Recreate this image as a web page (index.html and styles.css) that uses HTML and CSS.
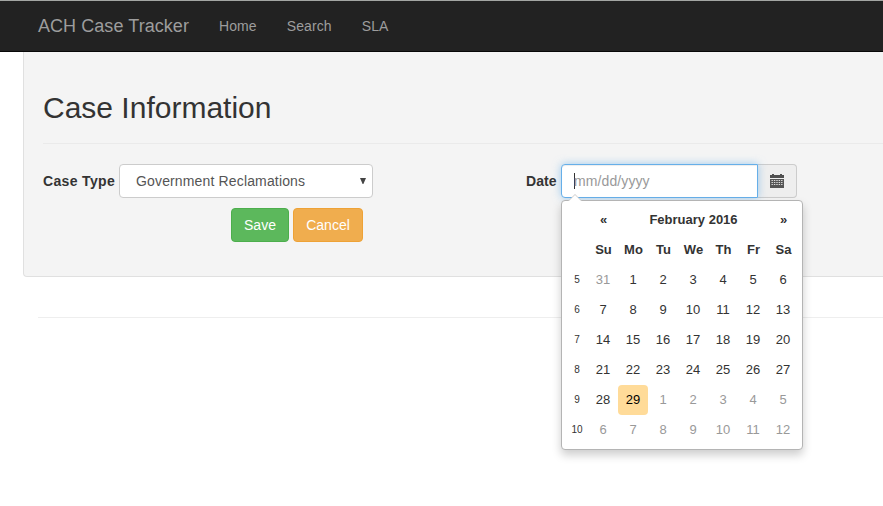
FILE: index.html
```html
<!DOCTYPE html>
<html lang="en">
<head>
<meta charset="utf-8">
<title>ACH Case Tracker</title>
<link rel="stylesheet" href="styles.css">
</head>
<body>
<nav class="navbar">
  <a class="brand">ACH Case Tracker</a>
  <a class="nav-link">Home</a>
  <a class="nav-link">Search</a>
  <a class="nav-link">SLA</a>
</nav>
<main class="well">
  <h2 class="title">Case Information</h2>
  <div class="form-row">
    <div class="case-type">
      <label class="label label-type">Case Type</label>
      <div class="control select"><span>Government Reclamations</span>
        <svg class="arrow" width="6" height="6" viewBox="0 0 6 6"><path d="M0 0h6L3.4 6h-.8z" fill="#444"/></svg>
      </div>
    </div>
    <div class="date">
      <label class="label label-date">Date</label>
      <div class="control input"><i class="caret"></i><span>mm/dd/yyyy</span></div>
      <div class="addon">
        <svg width="14" height="14" viewBox="0 0 14 14"><path fill="#505050" d="M0 1h2V0h2v1h6V0h2v1h2v3H0z"/><path fill="#555" fill-rule="evenodd" d="M0 5h14v9H0z"/><path d="M1.5 7h11M1.5 9h11M1.5 11h11" stroke="#ddd" stroke-width="1" stroke-dasharray="1.4 1" transform="translate(0 -.5)"/></svg>
      </div>
      <div class="picker">
        <svg class="tip" width="14" height="7" viewBox="0 0 14 7"><path d="M0 7L7 0l7 7z" fill="#ccc"/><path d="M1 7l6-6 6 6z" fill="#fff"/></svg>
        <div class="grid">
          <span></span><b>«</b><b class="month">February 2016</b><b>»</b>
          <span></span><b>Su</b><b>Mo</b><b>Tu</b><b>We</b><b>Th</b><b>Fr</b><b>Sa</b>
          <small>5</small><span class="out">31</span><span>1</span><span>2</span><span>3</span><span>4</span><span>5</span><span>6</span>
          <small>6</small><span>7</span><span>8</span><span>9</span><span>10</span><span>11</span><span>12</span><span>13</span>
          <small>7</small><span>14</span><span>15</span><span>16</span><span>17</span><span>18</span><span>19</span><span>20</span>
          <small>8</small><span>21</span><span>22</span><span>23</span><span>24</span><span>25</span><span>26</span><span>27</span>
          <small>9</small><span>28</span><span class="today">29</span><span class="out">1</span><span class="out">2</span><span class="out">3</span><span class="out">4</span><span class="out">5</span>
          <small>10</small><span class="out">6</span><span class="out">7</span><span class="out">8</span><span class="out">9</span><span class="out">10</span><span class="out">11</span><span class="out">12</span>
        </div>
      </div>
    </div>
  </div>
  <div class="actions">
    <button class="btn save">Save</button>
    <button class="btn cancel">Cancel</button>
  </div>
</main>
<hr class="footer-rule">
</body>
</html>
```
FILE: styles.css
```css
* { box-sizing: border-box; }
body {
  margin: 0;
  min-height: 100vh;
  background: #fff;
  color: #333;
  font: 14px/20px "Liberation Sans", Arial, sans-serif;
}
.navbar {
  display: flex;
  height: 52px;
  padding-left: 23px;
  background: #222;
  border-top: 1px solid #a3a6a3;
  border-bottom: 1px solid #080808;
  color: #9d9d9d;
}
.brand { padding: 15px; font-size: 18px; letter-spacing: .06px; }
.nav-link { padding: 15px; letter-spacing: .1px; }
.well {
  height: 225px;
  margin-left: 23px;
  padding: 39px 0 0 19px;
  background: #f4f4f4;
  border: solid #e0e0e0;
  border-width: 0 0 1px 1px;
  border-bottom-left-radius: 4px;
}
.title {
  margin: 0 0 20px;
  height: 53px;
  border-bottom: 1px solid #eaeaea;
  font-size: 30px;
  font-weight: 400;
  line-height: 33px;
}
.form-row { display: flex; }
.case-type { display: flex; align-items: center; width: 483px; }
.date { display: flex; align-items: center; position: relative; }
.label { font-weight: bold; white-space: nowrap; }
.label-type { width: 76px; letter-spacing: .35px; }
.label-date { width: 35px; letter-spacing: .1px; }
.control {
  display: flex;
  align-items: center;
  height: 34px;
  background: #fff;
  border: 1px solid #ccc;
  border-radius: 4px;
  color: #555;
}
.select { width: 254px; padding: 0 6px 0 16px; justify-content: space-between; letter-spacing: .15px; }
.input {
  position: relative;
  z-index: 1;
  width: 197px;
  padding-left: 12px;
  border-color: #66afe9;
  border-radius: 4px 0 0 4px;
  color: #999;
  letter-spacing: .1px;
  box-shadow: inset 0 1px 1px rgba(0,0,0,.075), 0 0 8px rgba(102,175,233,.6);
}
.caret { width: 1px; height: 16px; margin-right: -1px; background: #333; }
.addon {
  display: flex;
  align-items: center;
  justify-content: center;
  width: 39px;
  height: 34px;
  background: #eee;
  border: 1px solid #ccc;
  border-left: 0;
  border-radius: 0 4px 4px 0;
}
.picker {
  position: absolute;
  z-index: 2;
  top: 36px;
  left: 35px;
  width: 242px;
  height: 250px;
  padding: 4px;
  background: #fff;
  border: 1px solid #b4b4b4;
  border-radius: 4px;
  box-shadow: 0 5px 10px rgba(0,0,0,.2);
}
.tip { position: absolute; top: -7px; left: 6px; }
.grid {
  display: grid;
  grid-template-columns: 22px repeat(7, 30px);
  grid-auto-rows: 30px;
  font-size: 13px;
  line-height: 30px;
  text-align: center;
}
.grid b { padding-left: 1px; }
.grid small { font-size: 10px; }
.month { grid-column: span 5; }
.out { color: #999; }
.today { background: #ffdb99; border-radius: 4px; color: #000; }
.actions { display: flex; gap: 4px; margin: 10px 0 0 188px; }
.btn {
  height: 34px;
  padding: 0;
  border: 1px solid;
  border-radius: 4px;
  color: #fff;
  font: inherit;
}
.save { width: 58px; background: #5cb85c; border-color: #4cae4c; }
.cancel { width: 70px; background: #f0ad4e; border-color: #eea236; }
.footer-rule { margin: 40px 0 0 38px; border: 0; border-top: 1px solid #eee; }
```
